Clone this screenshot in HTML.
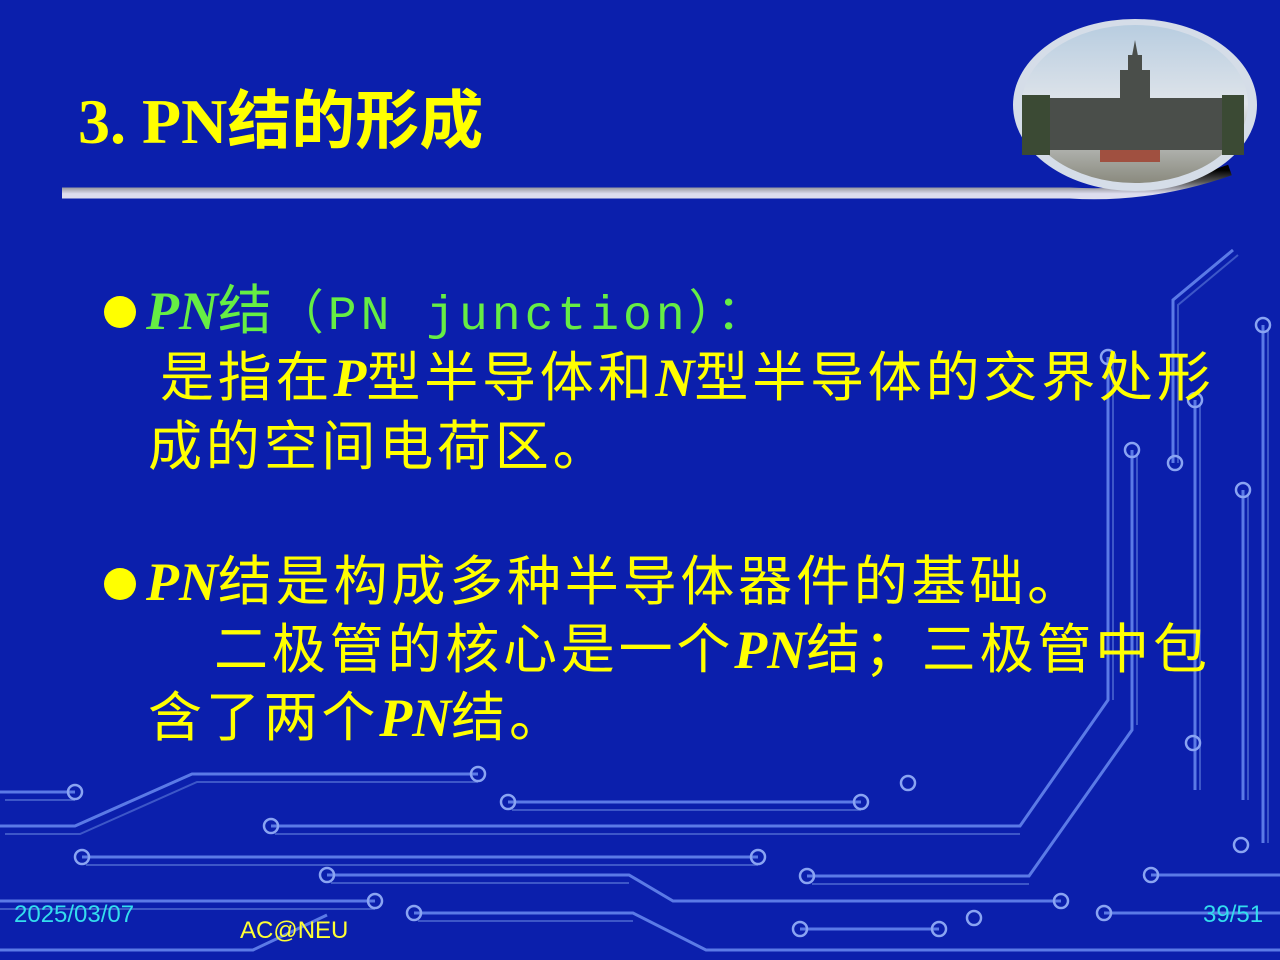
<!DOCTYPE html>
<html><head><meta charset="utf-8"><style>
html,body{margin:0;padding:0}
body{width:1280px;height:960px;background:#0b1fac;position:relative;overflow:hidden;font-family:"Liberation Serif","Noto Sans CJK SC",sans-serif}
.t{position:absolute;white-space:nowrap}
.y{color:#ffff00}
.g{color:#66ee44}
.pn{font-family:"Liberation Serif",serif;font-style:italic;font-weight:bold;letter-spacing:0}
.body{font-size:54px;line-height:60px;letter-spacing:3.8px;font-family:"Noto Sans CJK SC",sans-serif}
.bul{position:absolute;width:32px;height:32px;border-radius:50%;background:#ffff00}
</style></head><body>
<svg width="1280" height="960" style="position:absolute;left:0;top:0" fill="none">
<defs>
<linearGradient id="bar" x1="0" y1="0" x2="0" y2="1"><stop offset="0" stop-color="#000"/><stop offset=".5" stop-color="#555"/><stop offset="1" stop-color="#dde"/></linearGradient>
<linearGradient id="sky" x1="0" y1="0" x2="0" y2="1"><stop offset="0" stop-color="#b8cde0"/><stop offset=".5" stop-color="#dfe4ea"/><stop offset="1" stop-color="#8a8a7e"/></linearGradient>
</defs>
<g stroke="#5b7ae6" stroke-width="3">
<path d="M0 792H75M0 826H75L192 774H478M508 802H861M271 826H1020L1108 700V357M82 857H758M327 875H629L673 901H1061M807 876H1029L1132 730V450M0 901H375M414 913H633L706 950H1280M0 950H253L327 915M800 929H939M1104 913H1280M1151 875H1280M1195 400V790M1233 250L1173 300V463M1243 490V800M1263 325V843"/>
</g>
<g stroke="#3d57c8" stroke-width="2">
<path d="M5 800H75M5 834H80L197 782H478M512 810H861M275 834H1020M86 865H758M331 883H629M812 884H1029M0 909H375M418 921H633M1113 362V700M1137 455V725M1200 405V790M1238 255L1178 305V463M1248 495V800M1268 330V843"/>
</g>
<g stroke="#8aa4f2" stroke-width="2.5">
<circle cx="75" cy="792" r="7"/><circle cx="478" cy="774" r="7"/><circle cx="508" cy="802" r="7"/><circle cx="861" cy="802" r="7"/><circle cx="908" cy="783" r="7"/><circle cx="271" cy="826" r="7"/><circle cx="82" cy="857" r="7"/><circle cx="758" cy="857" r="7"/><circle cx="327" cy="875" r="7"/><circle cx="1061" cy="901" r="7"/><circle cx="807" cy="876" r="7"/><circle cx="375" cy="901" r="7"/><circle cx="414" cy="913" r="7"/><circle cx="800" cy="929" r="7"/><circle cx="939" cy="929" r="7"/><circle cx="974" cy="918" r="7"/><circle cx="1104" cy="913" r="7"/><circle cx="1151" cy="875" r="7"/><circle cx="1193" cy="743" r="7"/><circle cx="1241" cy="845" r="7"/>
<circle cx="1108" cy="357" r="7"/><circle cx="1132" cy="450" r="7"/><circle cx="1175" cy="463" r="7"/><circle cx="1195" cy="400" r="7"/><circle cx="1243" cy="490" r="7"/><circle cx="1263" cy="325" r="7"/>
</g>
<path d="M62 193H1070Q1150 198 1230 170" stroke="url(#bar)" stroke-width="11"/>
<ellipse cx="1135" cy="105" rx="122" ry="86" fill="#d5dde8"/>
<ellipse cx="1135" cy="104" rx="113" ry="79" fill="url(#sky)"/>
<g fill="#4a4e4a"><rect x="1040" y="98" width="190" height="52"/><rect x="1120" y="70" width="30" height="80"/><rect x="1128" y="55" width="14" height="20"/><path d="M1135 40l3 16h-6z"/><rect x="1022" y="95" width="28" height="60" fill="#3b4a34"/><rect x="1222" y="95" width="22" height="60" fill="#3b4a34"/></g>
<rect x="1100" y="150" width="60" height="12" fill="#a05040"/>
</svg>
<div class="t y" style="left:78px;top:84px;font-size:64px;font-weight:bold;line-height:76px">3. PN结的形成</div>
<div class="bul" style="left:104px;top:296px"></div>
<div class="t body" style="left:146px;top:276px"><span class="g pn">PN</span><span class="g">结</span><span class="g" style="font-family:'Liberation Mono','Noto Sans CJK SC',monospace;font-size:48px;letter-spacing:4px">（PN junction）：</span></div>
<div class="t body y" style="left:160px;top:343px">是指在<span class="pn">P</span>型半导体和<span class="pn">N</span>型半导体的交界处形</div>
<div class="t body y" style="left:148px;top:412px">成的空间电荷区。</div>
<div class="bul" style="left:104px;top:568px"></div>
<div class="t body y" style="left:146px;top:547px"><span class="pn">PN</span>结是构成多种半导体器件的基础。</div>
<div class="t body y" style="left:214px;top:615px">二极管的核心是一个<span class="pn">PN</span>结；三极管中包</div>
<div class="t body y" style="left:148px;top:683px">含了两个<span class="pn">PN</span>结。</div>
<div class="t" style="left:14px;top:901px;font-family:'Liberation Sans',sans-serif;font-size:24px;color:#33ddee">2025/03/07</div>
<div class="t" style="left:240px;top:917px;font-family:'Liberation Sans',sans-serif;font-size:24px;color:#ffff33">AC@NEU</div>
<div class="t" style="left:1203px;top:901px;font-family:'Liberation Sans',sans-serif;font-size:24px;color:#33ddee">39/51</div>
</body></html>
